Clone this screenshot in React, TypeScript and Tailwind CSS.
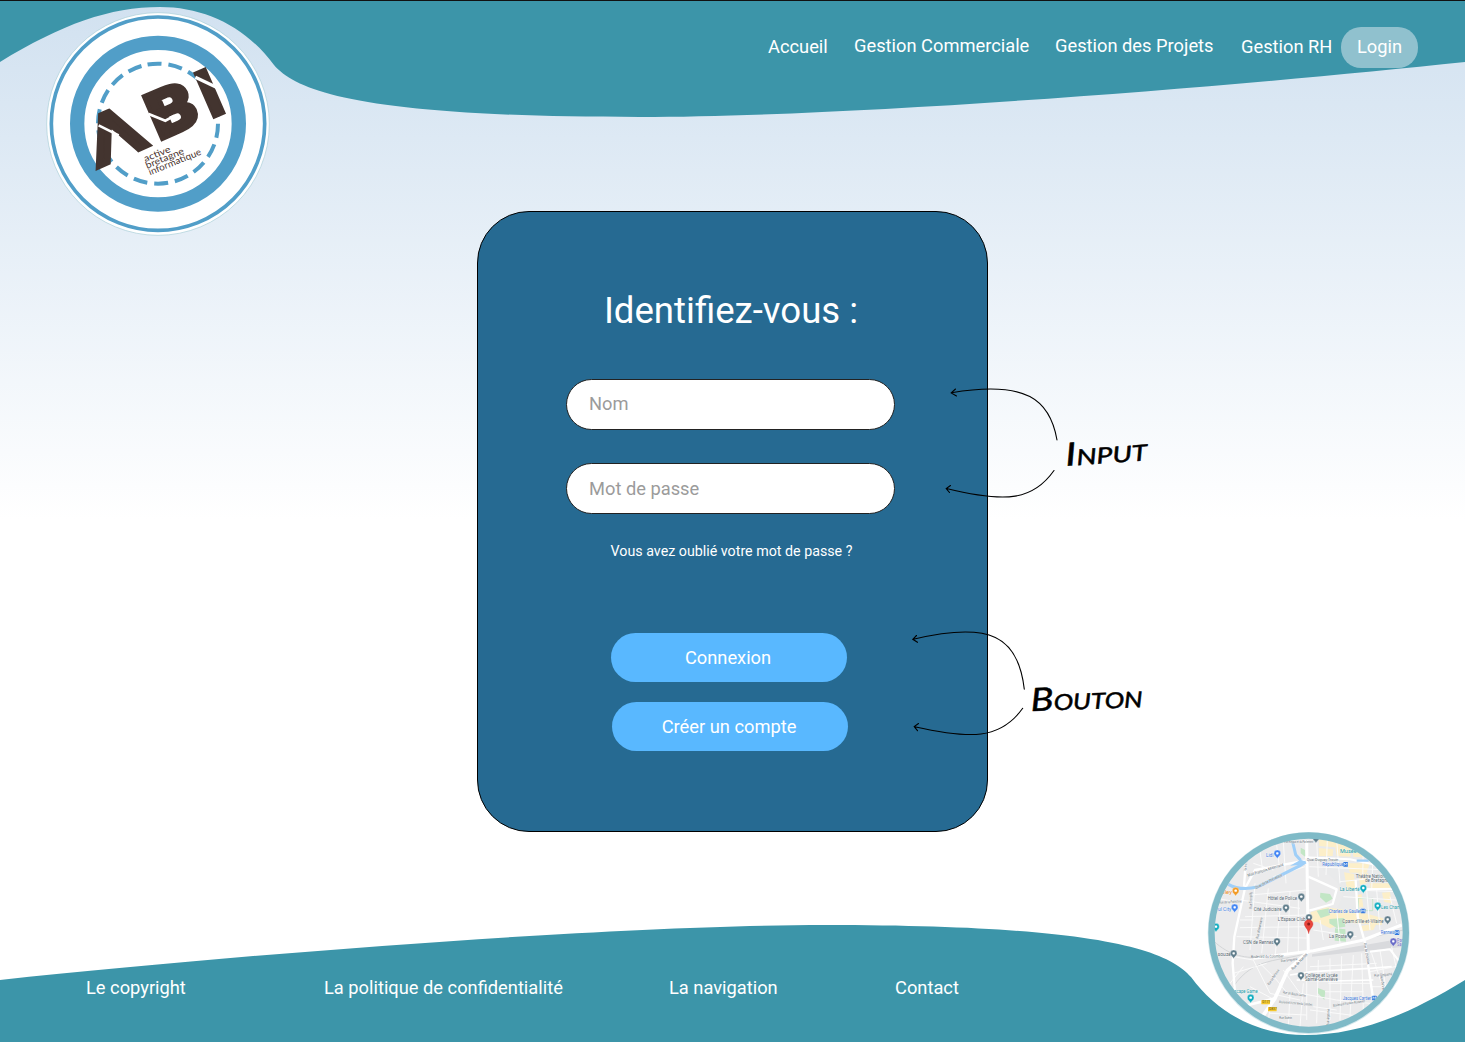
import React from "react";

const WAVE =
  "M0 0H1465V62C1220 88 850 117 640 117C370 117 298 93 274 65C246 27 205 7 160 7C110 7 62 24 0 62Z";

function Logo() {
  return (
    <svg className="relative h-[250px] w-80 shrink-0" viewBox="0 0 960 750" aria-label="ABI">
      <circle cx="474" cy="372" r="334" fill="#fff" stroke="#a9cfd8" strokeWidth="2" />
      <circle cx="474" cy="371" r="320" fill="none" stroke="#519ec8" strokeWidth="11" />
      <circle cx="474" cy="371" r="242.5" fill="none" stroke="#519ec8" strokeWidth="43" />
      <circle
        cx="474"
        cy="371"
        r="180"
        fill="none"
        stroke="#519ec8"
        strokeWidth="12"
        strokeDasharray="42 20.83"
        transform="rotate(-100 474 371)"
      />
      <g
        transform="translate(291 505) rotate(-23.5)"
        fontFamily="Roboto"
        fontWeight="900"
        fontSize="204"
        fill="#43342f"
        stroke="#43342f"
        strokeWidth="5"
      >
        <text x="2" y="-3" fontWeight="400" fontSize="196" strokeWidth="16" textLength="172" lengthAdjust="spacingAndGlyphs">Λ</text>
        <text x="203" y="-3" fontSize="196" strokeWidth="12" textLength="144" lengthAdjust="spacingAndGlyphs">B</text>
        <text x="370" y="0" strokeWidth="8" textLength="60" lengthAdjust="spacingAndGlyphs">I</text>
      </g>
      <g stroke="#fff" strokeWidth="8" fill="none">
        <path d="M296 376L356 406" />
        <path d="M446 342L496 362L524 347" />
        <path d="M586 232L654 264" strokeWidth="10" />
      </g>
      <g fontFamily="Lato" fontWeight="400" fontSize="28" fill="#4b342f">
        <text transform="translate(436 486) rotate(-22)" textLength="84" lengthAdjust="spacingAndGlyphs">active</text>
        <text transform="translate(441 506) rotate(-22)" textLength="122" lengthAdjust="spacingAndGlyphs">bretagne</text>
        <text transform="translate(450 526) rotate(-22)" textLength="168" lengthAdjust="spacingAndGlyphs">informatique</text>
      </g>
    </svg>
  );
}

type Pin = { x: number; y: number; c: string };
const pins: Pin[] = [
  { x: 262, y: 103, c: "#4285f4" },
  { x: 137, y: 215, c: "#f29a24" },
  { x: 134, y: 265, c: "#4285f4" },
  { x: 78, y: 323, c: "#12adc0" },
  { x: 334, y: 233, c: "#607d8b" },
  { x: 288, y: 266, c: "#607d8b" },
  { x: 357, y: 295, c: "#607d8b" },
  { x: 261, y: 367, c: "#607d8b" },
  { x: 131, y: 403, c: "#607d8b" },
  { x: 333, y: 469, c: "#607d8b" },
  { x: 182, y: 536, c: "#12adc0" },
  { x: 520, y: 207, c: "#12adc0" },
  { x: 563, y: 260, c: "#12adc0" },
  { x: 593, y: 301, c: "#607d8b" },
  { x: 481, y: 346, c: "#607d8b" },
  { x: 610, y: 367, c: "#6a6cc8" },
  { x: 378, y: 56, c: "#607d8b" },
];

type Label = { x: number; y: number; t: string; w: number; c?: string; r?: number; s?: number };
const labels: Label[] = [
  { x: 228, y: 112, t: "Lidl", w: 22, c: "#3f7de0" },
  { x: 282, y: 70, t: "e de Kergus et du Parlement", w: 88, s: 10 },
  { x: 450, y: 98, t: "Musée", w: 50, c: "#1597a5" },
  { x: 350, y: 122, t: "Quai Duguay Trouin", w: 95, s: 11 },
  { x: 397, y: 139, t: "République", w: 64, c: "#3471d6" },
  { x: 497, y: 173, t: "Théâtre National", w: 98 },
  { x: 525, y: 187, t: "de Bretagne", w: 72 },
  { x: 449, y: 214, t: "La Liberté", w: 60, c: "#1597a5" },
  { x: 233, y: 241, t: "Hôtel de Police", w: 88 },
  { x: 191, y: 273, t: "Cité Judiciaire", w: 84 },
  { x: 84, y: 273, t: "ul City", w: 40, c: "#3f7de0" },
  { x: 94, y: 223, t: "oley", w: 32, c: "#e38a25" },
  { x: 263, y: 303, t: "L'Espace Club", w: 84 },
  { x: 416, y: 279, t: "Charles de Gaulle", w: 94, c: "#3471d6" },
  { x: 573, y: 267, t: "Les Champs", w: 74, c: "#1597a5" },
  { x: 457, y: 308, t: "Cpam d'Ille-et-Vilaine", w: 124 },
  { x: 572, y: 343, t: "Rennes", w: 40, c: "#3471d6" },
  { x: 417, y: 353, t: "La Poste", w: 54 },
  { x: 159, y: 373, t: "CSN de Rennes", w: 92 },
  { x: 83, y: 409, t: "souzé", w: 40 },
  { x: 345, y: 471, t: "Collège et Lycée", w: 98 },
  { x: 345, y: 484, t: "Sainte-Geneviève", w: 98 },
  { x: 133, y: 519, t: "scape Game", w: 70, c: "#1597a5" },
  { x: 458, y: 539, t: "Jacques Cartier", w: 86, c: "#3471d6" },
  { x: 621, y: 367, t: "Parc", w: 24, c: "#6769c4" },
  { x: 621, y: 379, t: "Sain", w: 22, c: "#6769c4" },
  { x: 174, y: 170, t: "Mail François Mitterrand", w: 112, r: -17, s: 11 },
  { x: 197, y: 207, t: "Quai de la Prévalaye", w: 90, r: -26, s: 11 },
  { x: 87, y: 251, t: "Rue de la Palestine", w: 68, r: -3, s: 10 },
  { x: 187, y: 266, t: "Rue Tronjolly", w: 50, r: -90, s: 10 },
  { x: 205, y: 356, t: "Rue d'Inkermann", w: 64, r: -78, s: 10 },
  { x: 169, y: 153, t: "Rue Malakoff", w: 36, r: -85, s: 10 },
  { x: 183, y: 414, t: "Boulevard du Colombier", w: 98, r: -1, s: 11 },
  { x: 309, y: 451, t: "Rue de Nantes", w: 65, r: -47, s: 11 },
  { x: 273, y: 427, t: "Rue Ginguené", w: 50, r: -8, s: 10 },
  { x: 238, y: 496, t: "Rue de Bellevue", w: 54, r: -56, s: 10 },
  { x: 278, y: 520, t: "Rue de Boute-Jamin", w: 70, r: 9, s: 10 },
  { x: 267, y: 549, t: "Boulevard Victor Emile Combes", w: 100, r: 5, s: 10 },
  { x: 268, y: 598, t: "Rue Guérin", w: 38, s: 10 },
  { x: 430, y: 560, t: "Boulevard Franklin Roosevelt", w: 96, r: -8, s: 10 },
  { x: 521, y: 370, t: "Rue de Châtillon", w: 64, r: 80, s: 10 },
  { x: 553, y: 470, t: "Rue Ginguené", w: 54, r: -5, s: 10 },
  { x: 571, y: 467, t: "Rue de Vern", w: 50, r: 82, s: 10 },
  { x: 417, y: 617, t: "Rue Argonne", w: 50, r: -88, s: 10 },
];

const metros: [number, number][] = [
  [467, 133],
  [519, 273],
  [621, 338],
  [553, 534],
];

function LocationMap() {
  return (
    <svg className="relative h-[222px] w-60" viewBox="0 0 720 666" aria-label="Plan d'accès">
      <defs>
        <clipPath id="disc">
          <circle cx="356" cy="338" r="292" />
        </clipPath>
      </defs>
      <circle cx="356" cy="339" r="303" fill="#d6e9ed" />
      <g clipPath="url(#disc)">
        <rect width="720" height="666" fill="#ebebec" />
        <path d="M380 40L650 90L640 220L600 235L610 300L530 330L440 310L360 320L365 285L395 265L440 265L460 225L440 185L400 150L380 100Z" fill="#e9eaeb" />
        <g fill="#fcefc9">
          <path d="M384 45L480 60L482 110L440 108L436 82L388 78Z" />
          <path d="M386 84L430 88L428 108H388Z M488 75L520 80V112L490 110Z M470 130H540L530 158H480Z" />
          <path d="M462 157L492 162L496 210L472 212Z M505 160H535L530 190L510 195Z M540 190H605V208H542Z" />
          <path d="M362 277L410 262L520 278L580 295L575 315L475 308L420 325L382 306H362Z" />
          <path d="M503 225L515 222L520 262H508Z M576 218L600 216L605 250L582 246Z M512 318L560 310L550 330L516 334Z" />
        </g>
        <g fill="#c2e6c5">
          <path d="M332 83L345 90L347 112L332 100Z M391 218L420 222L428 236L408 248L390 232Z" />
          <path d="M380 272L416 265L420 285L392 294Z M418 297L462 294L466 320L440 324L418 310Z" />
          <path d="M435 325L466 328L468 365L434 362Z M382 503L406 512L403 540L384 520Z" />
        </g>
        <path d="M505 235H548V272H505Z" fill="none" stroke="#b5dfba" strokeWidth="2" />
        <path d="M366 403L640 355V380L366 410Z" fill="#d9dadd" />
        <g fill="none" stroke="#d3d5d7" strokeWidth="3">
          <path d="M70 362C120 410 170 415 220 412L360 394L640 330" />
          <path d="M130 500C190 410 270 425 350 400" />
        </g>
        <g fill="none" stroke="#fafafa" strokeWidth="3">
          <path d="M180 225L350 210 M150 240L330 265 M80 235L150 248 M165 290L350 285 M150 323L355 320 M140 350L350 354 M150 300L190 300 M195 190L180 390 M235 205L215 400 M270 270L255 410 M300 215L292 405 M325 240V400" />
          <path d="M205 60L218 150 M260 75L268 140 M190 130L250 150 M280 65L288 190 M345 140L250 170" />
          <path d="M130 410L190 420L240 520L330 540 M160 440L120 490 M210 430L260 480L300 530 M180 500L245 535L235 600 M280 450L330 520 M130 460L230 430 M240 580L350 585 M300 520L295 620 M340 490L330 620" />
          <path d="M330 520L440 540L540 550 M360 440L560 430 M350 410V600 M385 420L380 610 M420 415V600 M455 408L450 600 M490 405L480 590 M515 400L520 570 M360 570L520 590 M415 490H545 M405 515H520 M370 560L440 570" />
          <path d="M380 60L385 170 M412 60L408 165 M440 60L450 190 M520 75L518 180 M550 80L545 210 M358 140L600 150 M450 185L600 170 M500 210L620 215 M530 210L540 330 M560 210L570 330 M460 230L620 240 M370 330L500 350 M390 300L400 360 M440 270L450 370" />
          <path d="M545 400L610 600 M540 455L640 435 M540 500L620 500 M570 390L590 520 M605 380L620 450 M600 230L620 310" />
        </g>
        <g fill="none" stroke="#fff" strokeLinejoin="round">
          <path d="M345 122L195 150L165 205L133 350L128 430L136 530" strokeWidth="7" />
          <path d="M172 60L162 200" strokeWidth="7" />
          <path d="M350 60L355 400" strokeWidth="9" />
          <path d="M352 398L292 452L255 535L210 600" strokeWidth="11" />
          <path d="M255 535L175 555L150 570" strokeWidth="8" />
          <path d="M190 415L370 392L520 360L635 315" strokeWidth="9" />
          <path d="M497 180L503 290L524 365L550 540" strokeWidth="7" />
          <path d="M355 170L440 208L428 252L358 272" strokeWidth="7" />
          <path d="M345 112L480 118L650 155 M500 208L630 206" strokeWidth="6" />
          <path d="M300 465L365 455L540 445L605 440 M320 480L430 483L550 480" strokeWidth="5" />
          <path d="M540 395L600 388L640 440" strokeWidth="6" />
        </g>
        <g fill="none" stroke="#9fcff8" strokeWidth="9">
          <path d="M115 193C145 210 175 208 205 200L330 137L347 126" />
          <path d="M308 66L317 104L332 121" />
          <path d="M500 122H536" strokeWidth="7" />
        </g>
        <path d="M300 137L332 119L348 125L335 134Z" fill="#9fcff8" />
        <g fill="#f5c82e">
          <rect x="214" y="540" width="26" height="13" rx="2" />
          <rect x="234" y="561" width="26" height="13" rx="2" />
        </g>
        <g fontFamily="Roboto" fontSize="10" fill="#675921">
          <text x="217" y="550">D177</text>
          <text x="237" y="571">D837</text>
        </g>
        <g fontFamily="Roboto" stroke="#fff" strokeWidth="1" paintOrder="stroke">
          {labels.map((l, i) => (
            <text
              key={i}
              transform={`translate(${l.x} ${l.y}) rotate(${l.r || 0})`}
              fontSize={l.s ? l.s + 1 : 14}
              fill={l.c || "#56666f"}
              textLength={l.w}
              lengthAdjust="spacingAndGlyphs"
            >
              {l.t}
            </text>
          ))}
        </g>
        {metros.map(([x, y]) => (
          <g key={x}>
            <rect x={x - 7} y={y - 7} width="14" height="14" rx="2" fill="#3178df" />
            <path d={`M${x - 4} ${y + 4}V${y - 4}L${x} ${y + 1}L${x + 4} ${y - 4}V${y + 4}`} stroke="#fff" strokeWidth="1.8" fill="none" />
          </g>
        ))}
        {pins.map((p) => (
          <g key={`${p.x}-${p.y}`} transform={`translate(${p.x} ${p.y})`}>
            <path d="M0 14C-2 6 -10 5 -10 -3A10 10 0 0 1 10 -3C10 5 2 6 0 14Z" fill={p.c} stroke="#fff" strokeWidth="1" />
            <rect x="-3.5" y="-6.5" width="7" height="7" rx="2" fill="#fff" />
          </g>
        ))}
        <path d="M356 341C353 325 343 321 343 312A13 13 0 0 1 369 312C369 321 359 325 356 341Z" fill="#e8453c" stroke="#c5302a" strokeWidth="1" />
        <circle cx="356" cy="312" r="4.5" fill="#8e1c18" />
      </g>
      <circle cx="356" cy="338" r="291.5" fill="none" stroke="#7fbac7" strokeWidth="19" />
    </svg>
  );
}

function Annotations() {
  return (
    <svg className="pointer-events-none absolute inset-0 h-[1042px] w-[1465px]" viewBox="0 0 1465 1042">
      <g fill="none" stroke="#000" strokeWidth="1.1" strokeLinecap="round">
        <path d="M1057 440C1050 400 1026.700 380 951.500 392.700M955.500 389L951.200 392.900L956.500 396" />
        <path d="M1054 470.500C1033.300 500 1006.700 503.300 946.500 488.500M950.500 485.500L946.200 488.500L949.500 492.500" />
        <path d="M1024.300 689.300C1018.300 636 990 621 913.300 639.300M916.500 635.500L912.800 639.300L917.500 642.300" />
        <path d="M1022.700 708.300C1000 740 970 739 914.500 726.700M918.500 723.500L914.200 726.500L917.500 730.700" />
      </g>
      <g
        fontFamily="Lato"
        fontStyle="italic"
        fontWeight="400"
        fill="#000"
        stroke="#000"
        strokeWidth="0.5"
        strokeLinejoin="round"
      >
        <text transform="translate(1066 466) rotate(-4)" textLength="82" lengthAdjust="spacingAndGlyphs">
          <tspan fontSize="32">I</tspan>
          <tspan fontSize="22">NPUT</tspan>
        </text>
        <text transform="translate(1031 711) rotate(-2)" textLength="112" lengthAdjust="spacingAndGlyphs">
          <tspan fontSize="32">B</tspan>
          <tspan fontSize="22">OUTON</tspan>
        </text>
      </g>
    </svg>
  );
}

export default function App() {
  return (
    <div className="relative flex h-[1042px] w-[1465px] flex-col overflow-hidden bg-linear-to-b from-[#d1e1f0] to-white to-[520px] font-['Roboto',sans-serif] text-[18.3px] text-white">
      <header className="relative flex h-[211px] items-start border-t border-black">
        <svg className="absolute -top-px left-0 h-[118px] w-[1465px]" viewBox="0 0 1465 118">
          <path d={WAVE} fill="#3c95a9" />
          <path d="M0 .5H1465" stroke="#111" />
        </svg>
        <div className="-mt-px h-[210px] w-80 shrink-0">
          <Logo />
        </div>
        <nav className="relative ml-[448px] mt-[26px] flex h-[41px] items-center leading-5">
          <a className="-mt-0.5 w-[86px]">Accueil</a>
          <a className="-mt-1 w-[201px]">Gestion Commerciale</a>
          <a className="-mt-1 w-[186px]">Gestion des Projets</a>
          <a className="-mt-0.5 w-[100px]">Gestion RH</a>
          <a className="flex h-[41px] w-[77px] items-center justify-center rounded-[20px] bg-[#90c1ce] pb-0.5">Login</a>
        </nav>
      </header>

      <main className="relative">
        <form className="ml-[477px] flex h-[621px] w-[511px] flex-col items-center rounded-[52px] border border-black bg-[#266a92]">
          <h1 className="mr-[3px] mt-[77px] text-[36.600px] leading-[44px]">Identifiez-vous :</h1>
          <input
            placeholder="Nom"
            className="mr-1 mt-[46px] h-[51px] w-[329px] rounded-[26px] border border-[#222] bg-white px-[22px] pb-0.5 text-black placeholder:text-[#9b9b9b]"
          />
          <input
            type="password"
            placeholder="Mot de passe"
            className="mr-1 mt-[33px] h-[51px] w-[329px] rounded-[26px] border border-[#222] bg-white px-[22px] pb-px text-black placeholder:text-[#9b9b9b]"
          />
          <a className="mr-0.5 mt-[27px] text-[14.250px] leading-5">Vous avez oublié votre mot de passe ?</a>
          <button type="button" className="mr-[7px] mt-[72px] h-[49px] w-[236px] rounded-full bg-[#59b8ff] pr-0.5">
            Connexion
          </button>
          <button type="button" className="mr-[5px] mt-5 h-[49px] w-[236px] rounded-full bg-[#59b8ff] pr-0.5">
            Créer un compte
          </button>
        </form>
      </main>

      <footer className="relative flex h-[210px] items-end">
        <svg className="absolute bottom-0 left-0 h-[118px] w-[1465px]" viewBox="0 0 1465 118">
          <path d={WAVE} fill="#3c95a9" transform="rotate(180 732.5 59)" />
        </svg>
        <nav className="relative ml-[86px] flex h-16 w-[1104px] shrink-0 leading-5">
          <a className="w-[238px]">Le copyright</a>
          <a className="w-[345px]">La politique de confidentialité</a>
          <a className="w-[226px]">La navigation</a>
          <a>Contact</a>
        </nav>
        <LocationMap />
      </footer>
      <Annotations />
    </div>
  );
}
